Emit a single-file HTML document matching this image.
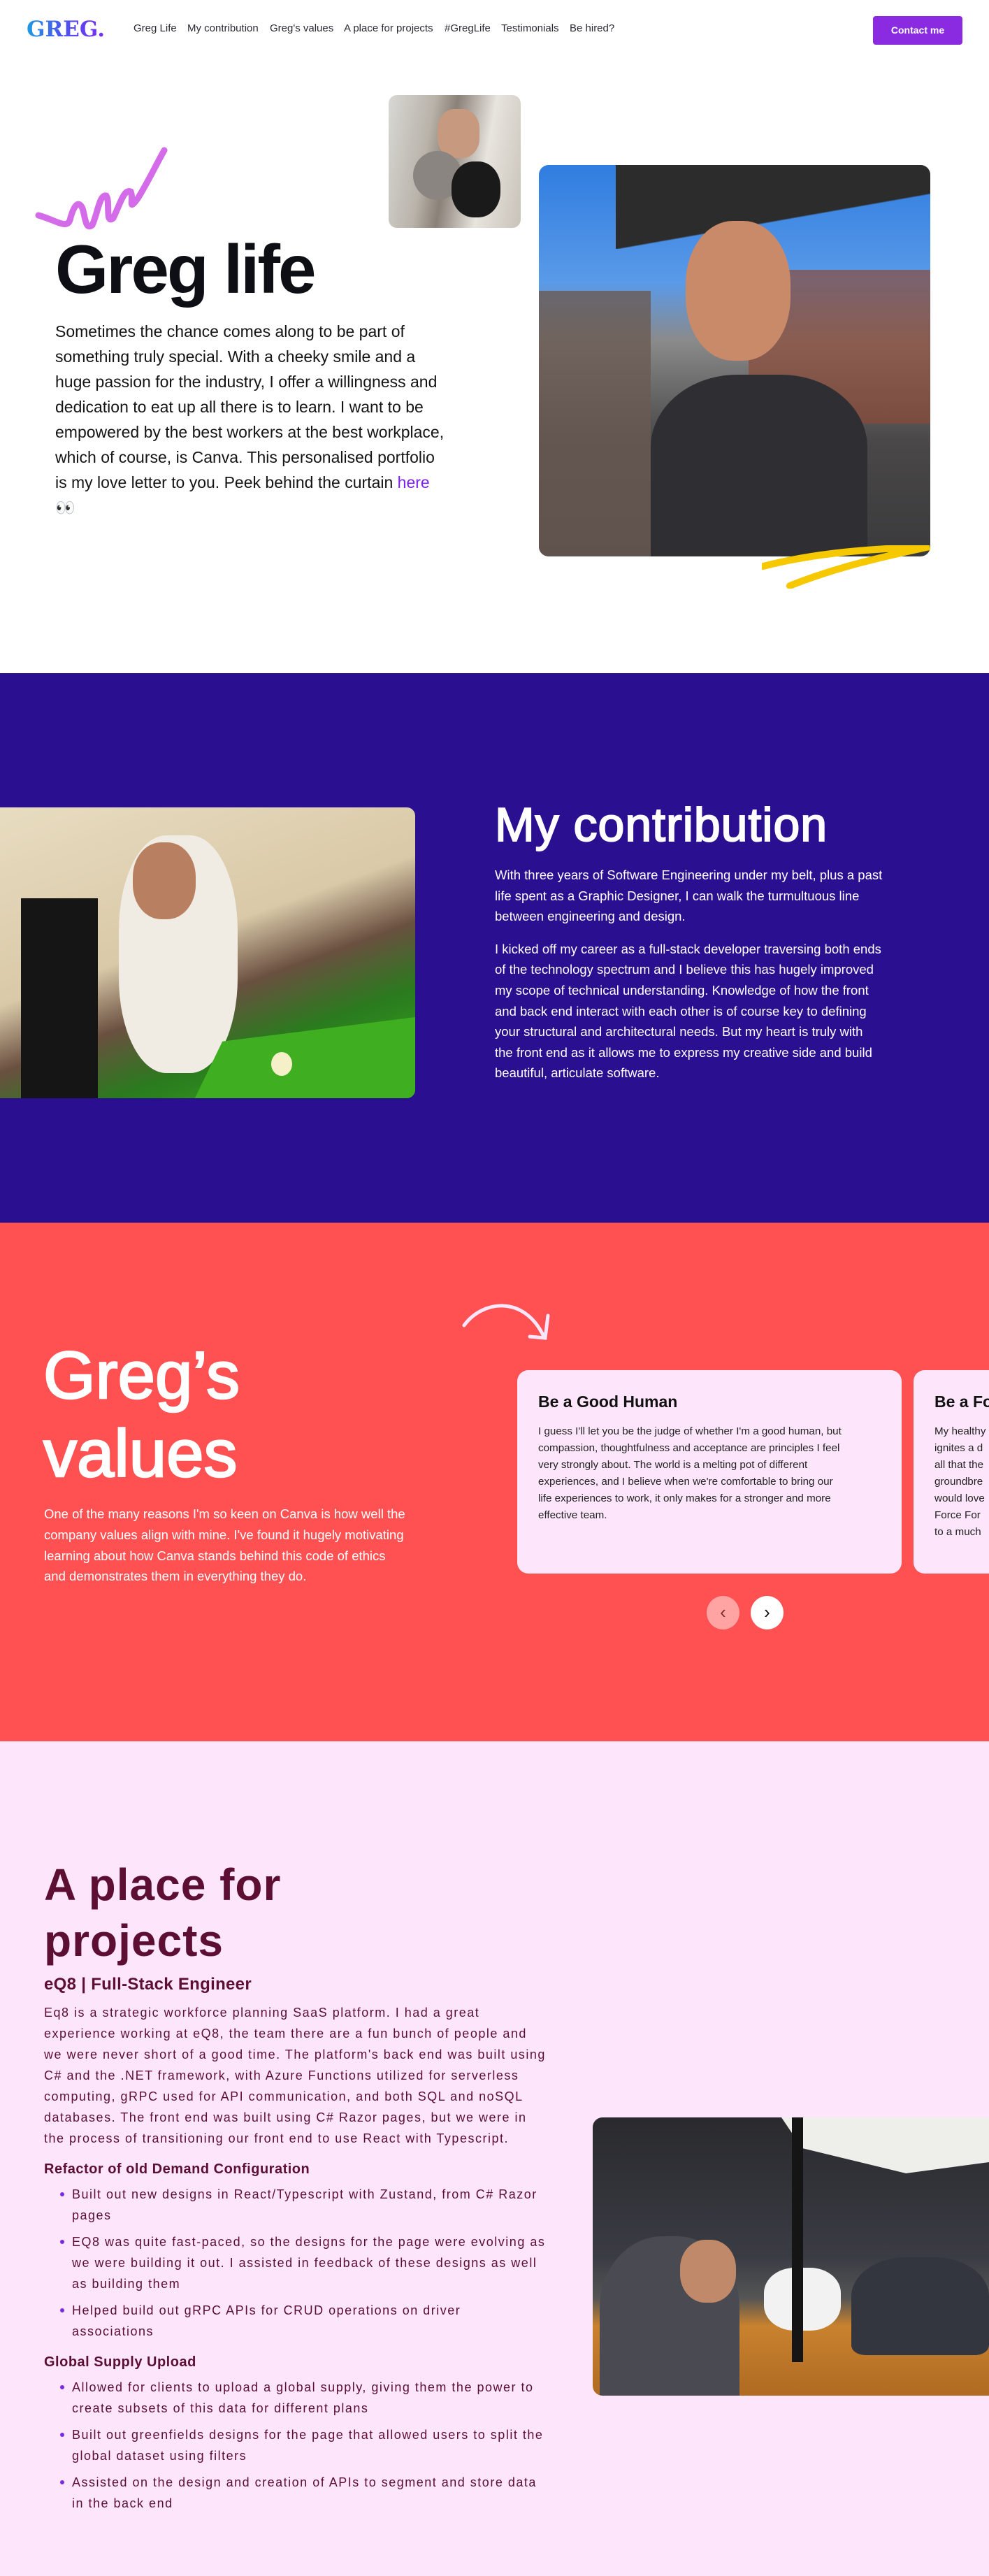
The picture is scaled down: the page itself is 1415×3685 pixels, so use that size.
<!DOCTYPE html>
<html><head><meta charset="utf-8">
<style>
*{margin:0;padding:0;box-sizing:border-box}
html,body{width:1415px;height:3685px;overflow:hidden}
body{font-family:"Liberation Sans",sans-serif;background:#fff;position:relative}
.abs{position:absolute}
.nw{white-space:nowrap}
nav a{position:absolute;top:32px;font-size:15px;color:#2a2a33;text-decoration:none;white-space:nowrap}
.logo{left:38px;top:24px;font-family:"DejaVu Serif","Liberation Serif",serif;font-weight:bold;font-size:31px;background:linear-gradient(90deg,#1e9be0,#4a55f0 45%,#7a2cf0);-webkit-background-clip:text;color:transparent}
.btn{left:1249px;top:23px;width:128px;height:41px;background:#8a2be2;border-radius:4px;color:#fff;font-size:14px;font-weight:bold;text-align:center;line-height:41px}
.photo{position:absolute;overflow:hidden}
.hp{font-size:23px;line-height:36px;color:#141414;left:79px;top:456px;white-space:nowrap}
.hp a{color:#7a22e6;text-decoration:none}
.sec{position:absolute;left:0;width:1415px}
.ct p{font-size:18.5px;line-height:29.6px;color:#fff;margin-bottom:17px;white-space:nowrap}
.card{position:absolute;background:#fde6fb;border-radius:16px;top:1960px;height:291px;width:550px;overflow:hidden}
.card h3{position:absolute;left:30px;top:32px;font-size:23px;color:#111;white-space:nowrap}
.card p{position:absolute;left:30px;top:76px;font-size:15.2px;line-height:24px;color:#222;white-space:nowrap}
.pj{color:#5c0e33;white-space:nowrap}
.pj p,.pj li{font-size:18px;line-height:30px;letter-spacing:1.5px}
.pj ul{list-style:none;margin:6px 0 10px 0}
.pj li{position:relative;padding-left:40px}
.pj li:before{content:"";position:absolute;left:23px;top:12px;width:6px;height:6px;border-radius:50%;background:#7a2ae0}
.pj h4{font-size:20px;font-weight:bold;letter-spacing:.5px;margin-top:14px;line-height:30px}
</style></head><body>
<nav>
<div class="abs logo">GREG.</div>
<a style="left:191px">Greg Life</a>
<a style="left:268px">My contribution</a>
<a style="left:386px">Greg's values</a>
<a style="left:492px">A place for projects</a>
<a style="left:636px">#GregLife</a>
<a style="left:717px">Testimonials</a>
<a style="left:815px">Be hired?</a>
<div class="abs btn">Contact me</div>
</nav>

<svg class="abs" style="left:50px;top:210px" width="190" height="125" viewBox="0 0 190 125"><path d="M5 98 C30 105 45 118 50 105 C55 85 62 75 68 88 C72 100 72 120 82 112 C90 95 92 68 102 70 C108 78 100 112 112 102 C122 82 127 60 137 64 C142 74 132 94 147 74 C162 50 172 28 185 5" fill="none" stroke="#d46be8" stroke-width="9" stroke-linecap="round"/></svg>
<div class="photo" style="left:556px;top:136px;width:189px;height:190px;border-radius:12px;background:linear-gradient(100deg,#d8d8d4 0%,#b9b3aa 30%,#8a8178 45%,#e8e4de 70%,#c8c2b8 100%)">
<div class="abs" style="left:70px;top:20px;width:60px;height:70px;border-radius:40%;background:#c79a80"></div>
<div class="abs" style="left:35px;top:80px;width:70px;height:70px;border-radius:50%;background:#8a8580"></div>
<div class="abs" style="left:90px;top:95px;width:70px;height:80px;border-radius:45%;background:#1a1a1a"></div>
</div>
<div class="abs" style="left:79px;top:330px;font-size:98px;font-weight:bold;letter-spacing:-3px;color:#0d0f14;line-height:110px">Greg life</div>
<div class="abs hp">Sometimes the chance comes along to be part of<br>something truly special. With a cheeky smile and a<br>huge passion for the industry, I offer a willingness and<br>dedication to eat up all there is to learn. I want to be<br>empowered by the best workers at the best workplace,<br>which of course, is Canva. This personalised portfolio<br>is my love letter to you. Peek behind the curtain <a>here</a><br>👀</div>
<div class="photo" style="left:771px;top:236px;width:560px;height:560px;border-radius:14px;background:linear-gradient(180deg,#2f7de0 0%,#5a9ae8 30%,#8a8a8a 45%,#4a4848 70%,#3a3a3c 100%)">
<div class="abs" style="left:110px;top:0;width:450px;height:120px;background:linear-gradient(170deg,#2c2c2c 60%,transparent 61%)"></div>
<div class="abs" style="left:300px;top:150px;width:260px;height:220px;background:#8a4a38;opacity:.7"></div>
<div class="abs" style="left:210px;top:80px;width:150px;height:200px;border-radius:45%;background:#c88a68"></div>
<div class="abs" style="left:160px;top:300px;width:310px;height:260px;border-radius:40% 40% 0 0;background:#2f2f33"></div>
<div class="abs" style="left:0;top:180px;width:160px;height:380px;background:#6a5a52;opacity:.8"></div>
</div>
<svg class="abs" style="left:1090px;top:780px" width="245" height="62" viewBox="0 0 245 62"><path d="M2 30 C80 10 160 5 240 2 C180 15 110 30 40 58" fill="none" stroke="#f5c800" stroke-width="10" stroke-linecap="round"/></svg>

<div class="sec" style="top:963px;height:786px;background:#2a0f91"></div>
<div class="photo" style="left:0;top:1155px;width:594px;height:416px;border-radius:0 12px 12px 0;background:linear-gradient(160deg,#e8dcc0 0%,#d9c9a8 45%,#6a5040 60%,#2a7a1e 75%,#39b51c 100%)">
<div class="abs" style="left:30px;top:130px;width:110px;height:286px;background:#151515"></div>
<div class="abs" style="left:170px;top:40px;width:170px;height:340px;border-radius:40%;background:#f0ece4"></div>
<div class="abs" style="left:190px;top:50px;width:90px;height:110px;border-radius:45%;background:#b88060"></div>
<div class="abs" style="left:200px;top:300px;width:394px;height:116px;background:#3fae20;clip-path:polygon(30% 30%,100% 0,100% 100%,20% 100%)"></div>
<div class="abs" style="left:388px;top:350px;width:30px;height:34px;border-radius:50%;background:#f5f0c8"></div>
</div>
<div class="abs" style="left:708px;top:1140px;font-size:68px;color:#fff;-webkit-text-stroke:2px #fff;letter-spacing:1px;line-height:80px">My contribution</div>
<div class="abs ct" style="left:708px;top:1237px">
<p>With three years of Software Engineering under my belt, plus a past<br>life spent as a Graphic Designer, I can walk the turmultuous line<br>between engineering and design.</p>
<p>I kicked off my career as a full-stack developer traversing both ends<br>of the technology spectrum and I believe this has hugely improved<br>my scope of technical understanding. Knowledge of how the front<br>and back end interact with each other is of course key to defining<br>your structural and architectural needs. But my heart is truly with<br>the front end as it allows me to express my creative side and build<br>beautiful, articulate software.</p>
</div>

<div class="sec" style="top:1749px;height:742px;background:#ff5152"></div>
<svg class="abs" style="left:660px;top:1852px" width="130" height="72" viewBox="0 0 130 72"><path d="M4 44 C30 8 90 0 118 60 M98 60 L120 62 L124 30" fill="none" stroke="#fde6fb" stroke-width="5" stroke-linecap="round"/></svg>
<div class="abs" style="left:62px;top:1912px;font-size:96px;line-height:112px;color:#fff;-webkit-text-stroke:2.5px #fff">Greg’s<br>values</div>
<div class="abs nw" style="left:63px;top:2151px;font-size:18.5px;line-height:29.8px;color:#fff">One of the many reasons I'm so keen on Canva is how well the<br>company values align with mine. I've found it hugely motivating<br>learning about how Canva stands behind this code of ethics<br>and demonstrates them in everything they do.</div>
<div class="card" style="left:740px"><h3>Be a Good Human</h3><p>I guess I'll let you be the judge of whether I'm a good human, but<br>compassion, thoughtfulness and acceptance are principles I feel<br>very strongly about. The world is a melting pot of different<br>experiences, and I believe when we're comfortable to bring our<br>life experiences to work, it only makes for a stronger and more<br>effective team.</p></div>
<div class="card" style="left:1307px;width:108px;border-radius:16px 0 0 16px"><h3>Be a Force For Good</h3><p>My healthy<br>ignites a d<br>all that the<br>groundbre<br>would love<br>Force For<br>to a much</p></div>
<div class="abs" style="left:1011px;top:2283px;width:47px;height:48px;border-radius:50%;background:#ffa3a3;color:#7a3030;font-size:26px;text-align:center;line-height:46px">‹</div>
<div class="abs" style="left:1074px;top:2283px;width:47px;height:48px;border-radius:50%;background:#fff;color:#111;font-size:26px;text-align:center;line-height:46px">›</div>

<div class="sec" style="top:2491px;height:1194px;background:#fde6fb"></div>
<div class="abs pj" style="left:63px;top:2656px">
<div style="font-size:64px;font-weight:bold;line-height:80px;letter-spacing:1px;margin-bottom:6px">A place for<br>projects</div>
<div style="font-size:24px;font-weight:bold;letter-spacing:.3px;line-height:34px;margin-bottom:8px">eQ8 | Full-Stack Engineer</div>
<p>Eq8 is a strategic workforce planning SaaS platform. I had a great<br>experience working at eQ8, the team there are a fun bunch of people and<br>we were never short of a good time. The platform's back end was built using<br>C# and the .NET framework, with Azure Functions utilized for serverless<br>computing, gRPC used for API communication, and both SQL and noSQL<br>databases. The front end was built using C# Razor pages, but we were in<br>the process of transitioning our front end to use React with Typescript.</p>
<h4>Refactor of old Demand Configuration</h4>
<ul><li>Built out new designs in React/Typescript with Zustand, from C# Razor<br>pages</li><li style="margin-top:8px">EQ8 was quite fast-paced, so the designs for the page were evolving as<br>we were building it out. I assisted in feedback of these designs as well<br>as building them</li><li style="margin-top:8px">Helped build out gRPC APIs for CRUD operations on driver<br>associations</li></ul>
<h4>Global Supply Upload</h4>
<ul><li>Allowed for clients to upload a global supply, giving them the power to<br>create subsets of this data for different plans</li><li style="margin-top:8px">Built out greenfields designs for the page that allowed users to split the<br>global dataset using filters</li><li style="margin-top:8px">Assisted on the design and creation of APIs to segment and store data<br>in the back end</li></ul>
</div>
<div class="photo" style="left:848px;top:3029px;width:567px;height:398px;border-radius:14px 0 0 14px;background:linear-gradient(180deg,#2a2a2e 0%,#3a3c44 50%,#555 65%,#c9822e 75%,#b06a22 100%)">
<div class="abs" style="left:270px;top:0;width:297px;height:80px;background:#eeeeea;clip-path:polygon(0 0,100% 0,100% 80%,60% 100%,10% 55%)"></div>
<div class="abs" style="left:10px;top:170px;width:200px;height:228px;border-radius:45% 45% 0 0;background:#4a4a52"></div>
<div class="abs" style="left:125px;top:175px;width:80px;height:90px;border-radius:45%;background:#c08a6a"></div>
<div class="abs" style="left:245px;top:215px;width:110px;height:90px;border-radius:40%;background:#f2f2f2"></div>
<div class="abs" style="left:370px;top:200px;width:197px;height:140px;border-radius:40% 40% 10% 10%;background:#33363e"></div>
<div class="abs" style="left:285px;top:0;width:16px;height:350px;background:#151515"></div>
</div>
</body></html>
